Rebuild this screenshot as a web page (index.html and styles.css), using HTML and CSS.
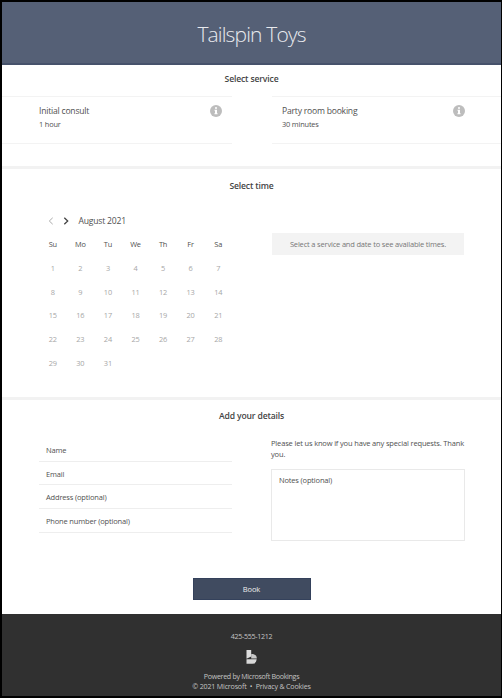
FILE: index.html
```html
<!DOCTYPE html>
<html lang="en">
<head>
<meta charset="utf-8">
<title>Tailspin Toys</title>
<link rel="stylesheet" href="styles.css">
</head>
<body>
<div class="page">
  <header class="banner"><h1>Tailspin Toys</h1></header>

  <section class="services">
    <h2>Select service</h2>
    <div class="service-list">
      <div class="service service-first">
        <div><div class="service-name">Initial consult</div><div class="service-time">1 hour</div></div>
        <svg class="info" viewBox="0 0 12 12"><circle cx="6" cy="6" r="6"/><path d="M5 2.2h2v1.6H5zM4.5 4.8H7v3.5h.6v1H4.4v-1H5V5.8h-.5z"/></svg>
      </div>
      <div class="service service-second">
        <div><div class="service-name">Party room booking</div><div class="service-time">30 minutes</div></div>
        <svg class="info" viewBox="0 0 12 12"><circle cx="6" cy="6" r="6"/><path d="M5 2.2h2v1.6H5zM4.5 4.8H7v3.5h.6v1H4.4v-1H5V5.8h-.5z"/></svg>
      </div>
    </div>
  </section>

  <section class="time">
    <h2>Select time</h2>
    <div class="columns">
      <div class="calendar">
        <div class="month">
          <svg class="chev prev" viewBox="0 0 6 8"><path d="M4.7 .8 1.3 4l3.4 3.2"/></svg>
          <svg class="chev next" viewBox="0 0 6 8"><path d="M1.3 .8 4.7 4 1.3 7.2"/></svg>
          <span>August 2021</span>
        </div>
        <div class="days">
          <b>Su</b><b>Mo</b><b>Tu</b><b>We</b><b>Th</b><b>Fr</b><b>Sa</b>
          <i>1</i><i>2</i><i>3</i><i>4</i><i>5</i><i>6</i><i>7</i>
          <i>8</i><i>9</i><i>10</i><i>11</i><i>12</i><i>13</i><i>14</i>
          <i>15</i><i>16</i><i>17</i><i>18</i><i>19</i><i>20</i><i>21</i>
          <i>22</i><i>23</i><i>24</i><i>25</i><i>26</i><i>27</i><i>28</i>
          <i>29</i><i>30</i><i>31</i>
        </div>
      </div>
      <div class="hint">Select a service and date to see available times.</div>
    </div>
  </section>

  <section class="details">
    <h2>Add your details</h2>
    <div class="columns">
      <div class="fields">
        <div class="field">Name</div>
        <div class="field">Email</div>
        <div class="field">Address (optional)</div>
        <div class="field">Phone number (optional)</div>
      </div>
      <div class="requests">
        <p>Please let us know if you have any special requests. Thank<br>you.</p>
        <div class="notes">Notes (optional)</div>
      </div>
    </div>
    <div class="book">Book</div>
  </section>

  <footer>
    <div class="phone">425-555-1212</div>
    <svg class="logo" viewBox="0 0 11 14"><path class="stem" d="M.5 0H5.2V6.5L.5 8.8z"/><path class="bowl" d="M5.2 4H7Q10.8 4.8 10.8 8.6H5.2z"/><path class="base" d="M.5 9.3H10.7Q10.3 13.8 6.4 13.8H.5z"/></svg>
    <div class="powered">Powered by Microsoft Bookings</div>
    <div class="legal">© 2021 Microsoft &nbsp;•&nbsp; Privacy &amp; Cookies</div>
  </footer>
</div>
</body>
</html>
```
FILE: styles.css
```css
* { box-sizing: border-box; }
body { margin: 0; background: #fff; color: #505050; font: 7.5px/12px "Open Sans", "Noto Sans", sans-serif; }
h1, h2, p { margin: 0; }
.page { width: 502px; height: 698px; border: solid #000; border-width: 2px 1px 2px 2px; overflow: hidden; }
.banner { height: 63px; background: #556076; border-bottom: 2px solid #46526b; color: #e8eaee; text-align: center; }
h1 { font-size: 21px; font-weight: 300; line-height: 64px; letter-spacing: -.85px; }
h2 { font-size: 8.6px; font-weight: 600; line-height: 15px; letter-spacing: -.15px; text-align: center; color: #444; }

.services { height: 101px; padding-top: 7px; }
.service-list { display: flex; justify-content: space-between; margin-top: 9px; }
.service { display: flex; justify-content: space-between; height: 48px; border: solid #f3f3f3; border-width: 1px 0; padding-top: 8px; }
.service-first { width: 230px; padding-left: 37px; padding-right: 10px; }
.service-second { width: 229px; padding-left: 10px; padding-right: 36px; }
.service-name { font-size: 8.6px; line-height: 13px; letter-spacing: -.22px; }
.service-time { font-size: 7.4px; line-height: 12px; letter-spacing: -.18px; }
.info { width: 12px; height: 12px; }
.info circle { fill: #bdbdbd; }
.info path { fill: #fff; }

.time, .details { border-top: 3px solid #f2f2f2; }
.time { height: 231px; padding-top: 10px; }
.columns { display: flex; gap: 39px; margin-left: 37px; }
.calendar { width: 193px; padding-top: 19px; }
.month { display: flex; align-items: center; height: 16px; padding-left: 9px; font-size: 8.6px; letter-spacing: -.22px; }
.chev { width: 6px; height: 8px; margin-right: 9.3px; fill: none; stroke: #aaa; stroke-width: 1; }
.next { stroke: #444; stroke-width: 1.3; }
.days { display: grid; grid-template-columns: repeat(7, 1fr); grid-auto-rows: 23.75px; margin-top: 4px; font-size: 7.4px; line-height: 23.75px; letter-spacing: -.15px; text-align: center; }
.days b { font-weight: 400; }
.days i { font-style: normal; color: #a6a6a6; }
.hint { width: 192px; height: 22px; margin: 39px 0 0 1px; background: #f3f3f3; color: #777; font-size: 7.5px; line-height: 23px; letter-spacing: -.18px; text-align: center; }

.details { height: 217px; padding-top: 9px; }
.fields { width: 193px; padding-top: 14px; }
.field { height: 23.7px; padding-left: 7px; border-bottom: 1px solid #eee; font-size: 7.5px; line-height: 24px; letter-spacing: -.17px; }
.requests { width: 194px; padding-top: 14px; }
.requests p { font-size: 7.5px; line-height: 11px; letter-spacing: -.16px; white-space: nowrap; }
.notes { height: 72px; margin-top: 9px; padding: 4px 7px; border: 1px solid #e9e9e9; font-size: 7.5px; letter-spacing: -.17px; }
.book { width: 118px; height: 22px; margin: 36.5px auto 0; background: #404b60; border: 1px solid #34415b; color: #eee; font-size: 7.5px; line-height: 21px; letter-spacing: -.1px; text-align: center; }

footer { height: 82px; padding-top: 16px; background: #303030; color: #c4c4c4; font-size: 7.1px; line-height: 10px; letter-spacing: -.3px; text-align: center; }
.phone { line-height: 12px; }
.legal { letter-spacing: -.18px; }
.logo { display: block; width: 11px; height: 14px; margin: 8px auto 7px; }
.stem { fill: #ddd; }
.bowl { fill: #c8c8c8; }
.base { fill: #d8d8d8; }
```
